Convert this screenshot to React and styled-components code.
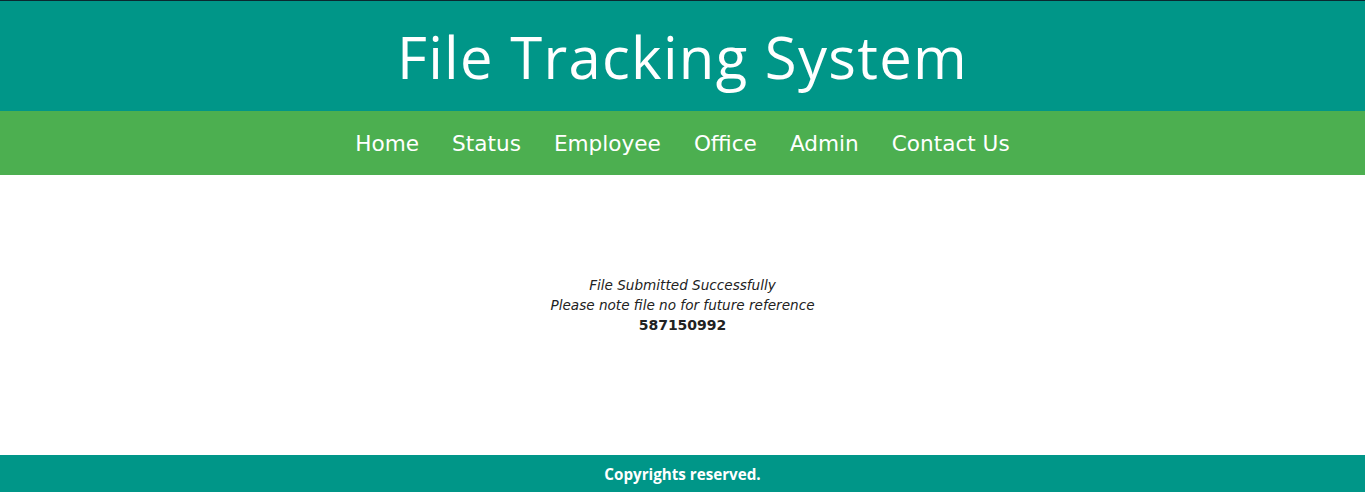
import React from "react";
import styled, { createGlobalStyle } from "styled-components";

const GlobalStyle = createGlobalStyle`
  html, body {
    margin: 0;
    padding: 0;
    background: #ffffff;
  }
`;

const Page = styled.div`
  display: flex;
  flex-direction: column;
  min-height: 492px;
`;

const Header = styled.header`
  background-color: #009688;
  border-top: 1px solid #0b2830;
  height: 110px;
  display: flex;
  align-items: center;
  justify-content: center;
`;

const Title = styled.h1`
  margin: 0;
  color: #ffffff;
  font-family: "Comic Sans MS", "Open Sans", sans-serif;
  font-weight: 400;
  font-size: 58px;
  letter-spacing: 1.3px;
`;

const Nav = styled.nav`
  background-color: #4caf50;
  height: 64px;
  display: flex;
  align-items: center;
  justify-content: center;
`;

const NavLink = styled.a`
  color: #ffffff;
  text-decoration: none;
  font-family: "DejaVu Sans", Verdana, sans-serif;
  font-size: 21.6px;
  padding: 0 16.5px;
  cursor: pointer;
`;

const Main = styled.main`
  flex: 1;
  height: 280px;
  box-sizing: border-box;
  padding-top: 100px;
  text-align: center;
  font-family: "DejaVu Sans", Verdana, sans-serif;
  font-size: 13.6px;
  line-height: 20px;
  color: #222222;
`;

const Note = styled.div`
  font-style: italic;
`;

const FileNo = styled.div`
  font-weight: bold;
  font-size: 14px;
`;

const Footer = styled.footer`
  background-color: #009688;
  height: 37px;
  display: flex;
  align-items: center;
  justify-content: center;
  color: #ffffff;
  font-family: "Comic Sans MS", "Open Sans", sans-serif;
  font-weight: bold;
  font-size: 15.2px;
`;

const links = ["Home", "Status", "Employee", "Office", "Admin", "Contact Us"];

const App = () => {
  return (
    <Page>
      <GlobalStyle />
      <Header>
        <Title>File Tracking System</Title>
      </Header>
      <Nav>
        {links.map((l) => (
          <NavLink key={l}>{l}</NavLink>
        ))}
      </Nav>
      <Main>
        <Note>File Submitted Successfully</Note>
        <Note>Please note file no for future reference</Note>
        <FileNo>587150992</FileNo>
      </Main>
      <Footer>Copyrights reserved.</Footer>
    </Page>
  );
};

export default App;
